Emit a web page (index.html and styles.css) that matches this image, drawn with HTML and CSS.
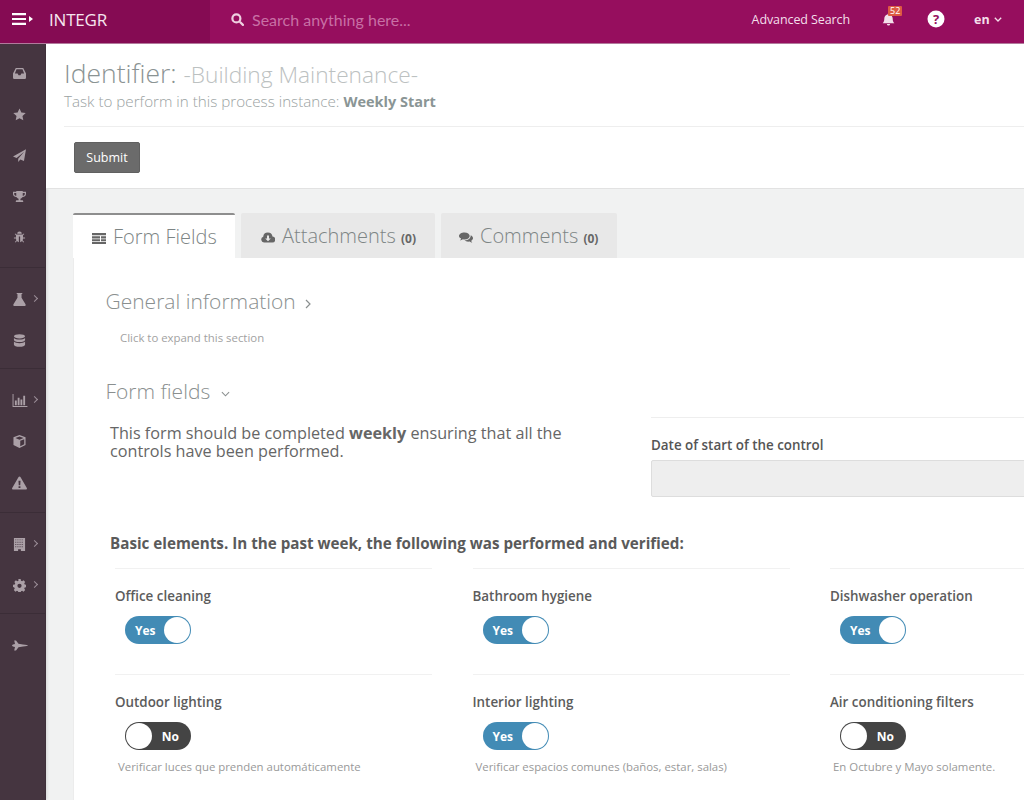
FILE: index.html
```html
<!DOCTYPE html>
<html lang="en">
<head>
<meta charset="utf-8">
<title>Building Maintenance</title>
<link rel="stylesheet" href="styles.css">
</head>
<body>
<header class="topbar">
  <div class="brand">
    <svg class="menu-icon" viewBox="0 0 22 12"><path d="M0 0h14v2.200H0zM0 4.900h14v2.200H0zM0 9.800h14V12H0zM17 3l4 3-4 3z"/></svg>
    <span class="brand-name">INTEGR</span>
  </div>
  <div class="search">
    <svg class="search-icon" viewBox="0 0 14 14"><circle cx="5.800" cy="5.800" r="4.300" fill="none" stroke="currentColor" stroke-width="2.400"/><path d="M8.600 10.200l1.700-1.700 3.400 3.400a1.200 1.200 0 0 1-1.700 1.700z"/></svg>
    <span class="search-text">Search anything here...</span>
  </div>
  <nav class="topnav">
    <span class="adv">Advanced Search</span>
    <span class="bell">
      <svg class="bell-icon" viewBox="0 0 14 14"><path d="M7 0.500a1 1 0 0 1 1 1c2.400.4 3.500 2.200 3.500 4.500 0 3 .8 4 1.800 5H.7c1-1 1.800-2 1.800-5 0-2.300 1.100-4.100 3.500-4.500a1 1 0 0 1 1-1zM5.300 11.800h3.400a1.700 1.700 0 0 1-3.400 0z"/></svg>
      <span class="badge">52</span>
    </span>
    <svg class="help" viewBox="0 0 18 18"><circle cx="9" cy="9" r="8.500" fill="#fff"/><text x="9" y="13.500" text-anchor="middle" class="help-q">?</text></svg>
    <span class="lang">en<svg class="lang-caret" viewBox="0 0 8 5"><path d="M.8.800L4 4l3.200-3.200" fill="none" stroke="currentColor" stroke-width="1.300"/></svg></span>
  </nav>
</header>
<div class="layout">
  <aside class="sidebar">
    <div class="side-group first">
      <div class="side-item"><svg viewBox="0 0 14 12"><path d="M3 0h8l3 6v4.500a1.300 1.300 0 0 1-1.300 1.300H1.300A1.300 1.300 0 0 1 0 10.500V6zM3.800 1.500L2 6h3l1 1.800h2L9 6h3l-1.800-4.500z" fill-rule="evenodd"/></svg></div>
      <div class="side-item"><svg viewBox="0 0 14 14"><path d="M7 .5l2 4.300 4.700.6-3.500 3.200.9 4.700L7 11l-4.100 2.300.9-4.700L.3 5.400 5 4.800z"/></svg></div>
      <div class="side-item"><svg viewBox="0 0 14 14"><path d="M14 .2L11.800 13 7.900 11.300 5.600 14v-3.500L12 3 3.900 9.700 0 8z"/></svg></div>
      <div class="side-item"><svg viewBox="0 0 14 14"><path d="M3.500 1h7v1H14v2.200c0 1.800-1.700 3.200-4 3.500-.5.800-1.200 1.400-2 1.700V11h1.800c.7 0 1.200.5 1.200 1.200v.8H3v-.8c0-.7.500-1.200 1.200-1.200H6V9.400c-.8-.3-1.500-.9-2-1.700C1.700 7.400 0 6 0 4.200V2h3.500zM1.300 3.300v.9c0 1 .9 1.800 2.300 2.100-.1-1-.1-2-.1-3zm11.400 0h-2.200c0 1 0 2-.1 3 1.400-.3 2.300-1.100 2.300-2.100z" fill-rule="evenodd"/></svg></div>
      <div class="side-item"><svg viewBox="0 0 14 14"><path d="M4.500 3a2.500 2.500 0 0 1 5 0zM3.700 3.800h6.600l1.200-1.200.7.700-1.400 1.400V7h2.200v1h-2.200c0 .8-.2 1.500-.5 2l1.700 1.800-.7.700-1.600-1.600c-.6.600-1.300 1-2 1.100V6H6.300v6c-.7-.1-1.400-.5-2-1.100l-1.600 1.600-.7-.7L3.700 10c-.3-.5-.5-1.200-.5-2H1V7h2.200V4.700L1.800 3.300l.7-.7z"/></svg></div>
    </div>
    <div class="side-group">
      <div class="side-item"><svg viewBox="0 0 14 14"><path d="M4 0h6v1.200H9.200v4L13.500 12c.5.900-.1 2-1.100 2H1.600c-1 0-1.600-1.100-1.100-2l4.300-6.800v-4H4z"/></svg><i class="chev"></i></div>
      <div class="side-item"><svg viewBox="0 0 14 14"><ellipse cx="7" cy="2.500" rx="6" ry="2.300"/><path d="M1 4.200c1 1.200 3.300 1.700 6 1.700s5-.5 6-1.700v2.300C13 7.800 10.300 8.700 7 8.700S1 7.800 1 6.500zM1 8.200c1 1.200 3.300 1.700 6 1.700s5-.5 6-1.700v3.300c0 1.300-2.700 2.200-6 2.200s-6-.9-6-2.200z"/></svg></div>
    </div>
    <div class="side-group">
      <div class="side-item"><svg class="wide" viewBox="0 0 16 14"><path d="M0 0h1v12.800h15V14H0zM2.500 7h2v5h-2zM5.500 4h2v8h-2zM8.500 6h2v6h-2zM11.500 2h2v10h-2z"/></svg><i class="chev"></i></div>
      <div class="side-item"><svg viewBox="0 0 14 14"><path d="M7 0l6.500 2.500v8.200L7 14 .5 10.700V2.500zM7 1.600L2.600 3.200 7 5l4.400-1.800zM7.800 6.300v5.800l4.300-2.200V4.600z" fill-rule="evenodd"/></svg></div>
      <div class="side-item"><svg class="big" viewBox="0 0 16 14"><path d="M8 0c.4 0 .8.200 1 .600l6.800 11.600c.4.800-.1 1.800-1 1.800H1.200c-.9 0-1.400-1-1-1.800L7 .6C7.200.2 7.600 0 8 0zM6.900 4.500l.3 5h1.600l.3-5zM7 10.500v1.800h2v-1.800z" fill-rule="evenodd"/></svg></div>
    </div>
    <div class="side-group">
      <div class="side-item"><svg viewBox="0 0 12 14"><path d="M0 0h12v14H7.500v-2h-3v2H0zM1.500 1.500v1h1v-1zM3.800 1.500v1h1v-1zM6.100 1.500v1h1v-1zM8.400 1.500v1h1v-1zM1.500 4v1h1V4zM3.800 4v1h1V4zM6.100 4v1h1V4zM8.400 4v1h1V4zM1.500 6.500v1h1v-1zM3.800 6.500v1h1v-1zM6.100 6.500v1h1v-1zM8.400 6.500v1h1v-1zM1.500 9v1h1V9zM3.800 9v1h1V9zM6.100 9v1h1V9zM8.400 9v1h1V9z" fill-rule="evenodd"/></svg><i class="chev"></i></div>
      <div class="side-item"><svg viewBox="0 0 14 14"><path d="M5.800 0h2.400l.4 1.900 1.200.5 1.600-1 1.700 1.700-1 1.600.5 1.200 1.900.4v2.400l-1.900.4-.5 1.200 1 1.600-1.700 1.700-1.600-1-1.200.5-.4 1.900H5.800l-.4-1.900-1.200-.5-1.600 1L.9 11.900l1-1.600-.5-1.200L0 8.700V6.300l1.900-.4.500-1.200-1-1.600L3.100 1.400l1.600 1 1.200-.5zM7 5a2.300 2.300 0 1 0 0 4.600A2.300 2.300 0 0 0 7 5z" fill-rule="evenodd"/></svg><i class="chev"></i></div>
    </div>
    <div class="side-group last">
      <div class="side-item"><svg class="wide" viewBox="0 0 16 12"><path d="M0 6c0-.8 1.600-1.300 3-1.500L2.200 1H4l2.500 3.200L11 5c3 .2 5 .5 5 1s-2 .8-5 1l-4.500.8L4 11H2.200L3 7.500C1.600 7.300 0 6.800 0 6z"/></svg></div>
    </div>
  </aside>
  <main class="main">
    <section class="head">
      <h1 class="title">Identifier: <small>-Building Maintenance-</small></h1>
      <p class="subtitle">Task to perform in this process instance: <strong>Weekly Start</strong></p>
      <hr class="head-rule">
      <button class="submit" type="button">Submit</button>
    </section>
    <section class="content">
      <div class="tabs">
        <div class="tab active"><svg class="tab-icon" viewBox="0 0 14 11"><path d="M0 0h14v2.300H0zM0 3.200h8v2.200H0zM9 3.200h5v2.200H9zM0 6.300h8v1.900H0zM9 6.300h5v1.900H9zM0 9h14v2H0z"/></svg>Form Fields</div>
        <div class="tab"><svg class="tab-icon" viewBox="0 0 14 11"><path d="M11.500 4.500A3 3 0 0 1 11 10.500H3a3 3 0 0 1-.8-5.800A4.700 4.700 0 0 1 11.500 4.500zM6 3.500v3H4.200L7 9.300l2.800-2.800H8v-3z" fill-rule="evenodd"/></svg>Attachments <b class="count">(0)</b></div>
        <div class="tab tab-last"><svg class="tab-icon" viewBox="0 0 14 11"><path d="M5.500 0.500c3 0 5.200 1.600 5.200 3.500S8.500 7.500 5.500 7.500c-.6 0-1.100 0-1.600-.2C3 8 2 8.400.9 8.500c.7-.7 1.100-1.300 1.200-2C.8 5.900 0 5 0 4 0 2.100 2.500.5 5.500.5zM11.700 3.300C13 4 14 5 14 6.300c0 1-.7 1.800-1.800 2.400.1.700.5 1.300 1.100 2-.9-.1-1.900-.500-2.700-1.200-1.900.4-4-.1-5-1.200 3.400.1 6.300-1.900 6.100-5z" fill-rule="evenodd"/></svg>Comments <b class="count">(0)</b></div>
      </div>
      <div class="panel">
        <h2 class="section-title first-title">General information <svg class="sec-right" viewBox="0 0 6 10"><path d="M1 1l4 4-4 4" fill="none" stroke="currentColor" stroke-width="1.200"/></svg></h2>
        <p class="expand">Click to expand this section</p>
        <h2 class="section-title second-title">Form fields <svg class="sec-down" viewBox="0 0 10 6"><path d="M1 1l4 4 4-4" fill="none" stroke="currentColor" stroke-width="1.200"/></svg></h2>
        <div class="intro-row">
          <p class="intro">This form should be completed <strong>weekly</strong> ensuring that all the controls have been performed.</p>
          <div class="date-col">
            <label class="date-label">Date of start of the control</label>
            <div class="date-input"></div>
          </div>
        </div>
        <h3 class="basic">Basic elements. In the past week, the following was performed and verified:</h3>
        <div class="grid">
          <div class="cell">
            <div class="label">Office cleaning</div>
            <div class="toggle on"><span class="tlabel">Yes</span><span class="knob"></span></div>
          </div>
          <div class="cell">
            <div class="label">Bathroom hygiene</div>
            <div class="toggle on"><span class="tlabel">Yes</span><span class="knob"></span></div>
          </div>
          <div class="cell">
            <div class="label">Dishwasher operation</div>
            <div class="toggle on"><span class="tlabel">Yes</span><span class="knob"></span></div>
          </div>
          <div class="cell">
            <div class="label">Outdoor lighting</div>
            <div class="toggle off"><span class="knob"></span><span class="tlabel">No</span></div>
            <div class="help-text">Verificar luces que prenden automáticamente</div>
          </div>
          <div class="cell">
            <div class="label">Interior lighting</div>
            <div class="toggle on"><span class="tlabel">Yes</span><span class="knob"></span></div>
            <div class="help-text">Verificar espacios comunes (baños, estar, salas)</div>
          </div>
          <div class="cell">
            <div class="label">Air conditioning filters</div>
            <div class="toggle off"><span class="knob"></span><span class="tlabel">No</span></div>
            <div class="help-text">En Octubre y Mayo solamente.</div>
          </div>
        </div>
      </div>
    </section>
  </main>
</div>
</body>
</html>
```
FILE: styles.css
```css
* { box-sizing: border-box; }
html, body { margin: 0; padding: 0; height: 800px; overflow: hidden; }
body { font-family: "Open Sans", "Liberation Sans", sans-serif; color: #555; background: #f1f2f2; width: 1024px; }

.topbar { display: flex; height: 44px; background: #960e5e; color: #fff; border-bottom: 1px solid #b27a9c; position: relative; z-index: 2; }
.brand { width: 210px; background: #850b53; display: flex; align-items: center; padding: 0 0 5px 12px; }
.menu-icon { width: 22px; height: 12px; fill: #fff; margin-right: 15px; flex: none; }
.brand-name { font-size: 17px; font-weight: 400; letter-spacing: -.2px; color: #f6e6ef; }
.search { flex: 1; display: flex; align-items: center; padding: 0 0 5px 21px; }
.search-icon { width: 13px; height: 13px; fill: #eecfe0; color: #eecfe0; margin-right: 8px; }
.search-text { font-family: Lato, "Open Sans", sans-serif; font-size: 16px; color: #c870a5; }
.topnav { display: flex; align-items: center; padding-bottom: 5px; }
.adv { font-size: 12.500px; letter-spacing: -.1px; color: #f3dfea; margin-right: 32px; }
.bell { position: relative; width: 14px; height: 14px; margin-right: 31px; margin-top: 2px; }
.bell-icon { width: 13px; height: 13px; fill: #f3dfea; display: block; }
.badge { position: absolute; left: 6px; top: -7px; background: #dd5a43; color: #fff; font-size: 9px; line-height: 10px; padding: 0 2px; border-radius: 1px; }
.help { width: 18px; height: 18px; margin-right: 29px; }
.help-q { font-size: 13px; font-weight: 700; fill: #960e5e; font-family: "Open Sans", sans-serif; }
.lang { font-size: 12.500px; font-weight: 700; width: 50px; color: #f3dfea; display: flex; align-items: center; }
.lang-caret { width: 8px; height: 5px; margin-left: 4px; }

.layout { display: flex; height: 756px; }
.sidebar { width: 46px; flex: none; background: #453540; border-right: 1px solid #3f303a; box-shadow: 1px 0 3px rgba(0,0,0,.12); }
.side-group { border-bottom: 1px solid #3b2d37; padding: 11px 0 8px; }
.side-group.first { padding-top: 9px; height: 224px; }
.side-group:nth-child(2) { height: 101px; }
.side-group:nth-child(3) { height: 144px; }
.side-group:nth-child(4) { height: 101px; }
.side-group.last { border-bottom: 0; }
.side-item { height: 41px; position: relative; display: flex; align-items: center; padding-left: 13px; }
.side-item svg { width: 13px; height: 13px; fill: #aba0a7; }
.side-item svg.wide { width: 16px; margin-left: -1px; }
.side-item svg.big { width: 15px; height: 14px; margin-left: -1px; }
.chev { position: absolute; left: 32px; top: 17px; width: 5px; height: 5px; border-top: 1px solid #9c8f98; border-right: 1px solid #9c8f98; transform: rotate(45deg); }

.main { flex: 1; min-width: 0; overflow: hidden; }
.head { background: #fff; height: 145px; padding: 13px 0 0 18px; border-bottom: 1px solid #e2e2e2; }
.title { margin: 0; font-size: 26.500px; line-height: 33px; font-weight: 300; color: #8a9393; }
.title small { font-size: 22.700px; color: #bcc1c1; font-weight: 300; }
.subtitle { margin: 0; font-size: 15.200px; line-height: 20px; color: #9aa2a2; font-weight: 300; }
.subtitle strong { font-weight: 700; font-size: 14.500px; color: #8a9595; }
.head-rule { border: 0; border-top: 1px solid #eee; margin: 14px 0 15px; }
.submit { display: block; margin-left: 10px; width: 66px; height: 31px; background: #6b6b6b; border: 1px solid #606060; border-radius: 2px; color: #fff; font: 400 12.500px "Open Sans", sans-serif; padding: 0 0 1px; }

.content { padding: 24px 0 0 27px; }
.tabs { display: flex; height: 46px; border-bottom: 1px solid #e6e6e6; }
.tab { background: #e8e8e8; height: 45px; padding: 9px 19px 0 20px; font-size: 20px; font-weight: 300; color: #7d8585; white-space: nowrap; border-radius: 2px 2px 0 0; margin-right: 6px; }
.tab.tab-last { padding-left: 18px; }
.tab.active { background: #fff; border-top: 2px solid #8e8e8e; height: 46px; width: 162px; padding: 8px 0 0 19px; }
.tab-icon { width: 14px; height: 11px; fill: #666; margin-right: 7px; }
.count { font-size: 12px; font-weight: 700; color: #666; }

.panel { background: #fff; height: 560px; padding: 0 0 0 32px; margin-top: -1px; width: 1060px; border-left: 1px solid #ececec; position: relative; }
.section-title { margin: 0 0 0 -.5px; font-size: 21px; line-height: 28px; font-weight: 300; color: #8a8f8f; }
.first-title { padding-top: 29px; box-sizing: content-box; height: 28px; }
.sec-right { width: 6px; height: 10px; margin-left: 4px; }
.sec-down { width: 9px; height: 6px; margin-left: 5px; vertical-align: 2px; }
.expand { margin: 15px 0 0 14px; font-size: 11.400px; line-height: 16px; color: #a2a2a2; }
.second-title { margin-top: 31px; }
.intro-row { display: flex; margin-top: 13px; padding-left: 4px; }
.intro { margin: 6px 0 0; width: 541px; padding-right: 50px; font-size: 16.200px; line-height: 18px; color: #666; flex: none; }
.intro strong { font-weight: 700; }
.date-col { flex: 1; border-top: 1px solid #eee; margin-top: -1px; padding-top: 18px; }
.date-label { display: block; font-size: 13.400px; font-weight: 600; line-height: 18px; color: #555; }
.date-input { height: 37px; margin-top: 6px; background: #eee; border: 1px solid #ddd; border-radius: 2px; }
.basic { margin: 36px 0 0 4px; font-size: 15.200px; line-height: 20px; font-weight: 700; color: #5a5a5a; }
.grid { display: grid; grid-template-columns: 357.500px 357.500px 320px; grid-auto-rows: 106px; margin-top: 15px; padding-left: 5px; }
.cell { padding: 0 0 0 4px; position: relative; }
.cell::before { content: ""; display: block; width: 317px; height: 1px; background: #f1f1f1; }
.label { font-size: 13.400px; font-weight: 600; line-height: 18px; margin-top: 18px; color: #5c5c5c; }
.toggle { margin: 11px 0 0 10px; width: 66px; height: 28px; border-radius: 15px; display: flex; align-items: center; justify-content: space-between; padding: 0 1px; color: #fff; font-size: 12px; font-weight: 700; }
.on { background: #428bb5; padding-left: 10px; }
.off { background: #444; padding-right: 12px; }
.knob { width: 26px; height: 26px; border-radius: 50%; background: #fff; flex: none; }
.help-text { margin: 9px 0 0 3px; font-size: 11.400px; line-height: 16px; color: #999; white-space: nowrap; }
```
